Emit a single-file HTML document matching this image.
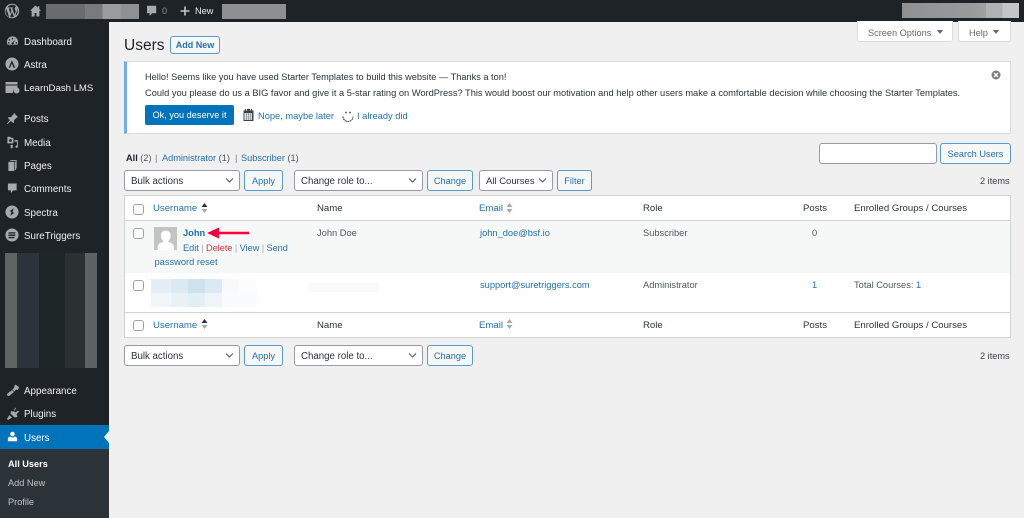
<!DOCTYPE html>
<html><head><meta charset="utf-8"><title>Users</title>
<style>
html,body{margin:0;padding:0;width:1024px;height:518px;overflow:hidden;background:#f0f0f1;font-family:"Liberation Sans",sans-serif;font-size:9.6px;color:#3c434a}
#w{position:absolute;left:0;top:0;width:1024px;height:518px;overflow:hidden;background:#f0f0f1;filter:blur(.3px)}
.a{position:absolute;white-space:nowrap;line-height:12px}
.b{position:absolute}
.m{color:#f0f0f1;font-size:9.8px}
.s{color:#c3c4c7;font-size:9.2px}
.l{color:#2271b1}
.h{color:#2c3338}
.btn{position:absolute;box-sizing:border-box;border:1px solid #5a9bcb;border-radius:3px;background:#f6f7f7;color:#2271b1;text-align:center;font-size:9.2px;height:21px;line-height:20px;white-space:nowrap}
.sel{position:absolute;box-sizing:border-box;border:1px solid #979a9f;border-radius:3px;background:#fff;color:#2c3338;font-size:9.7px;height:21px;line-height:21px;padding-left:6px;white-space:nowrap}
.sel svg{position:absolute;right:5px;top:6px}
.cb{position:absolute;box-sizing:border-box;width:11px;height:11px;border:1px solid #a0a3a8;border-radius:3px;background:#fff}
.ic{position:absolute;fill:#a7aaad}
</style></head><body><div id="w">

<div class="b" style="left:0;top:0;width:1024px;height:22px;background:#1d2327"></div>
<div class="b" style="left:0;top:22px;width:109px;height:496px;background:#1d2327"></div>

<!-- Admin bar -->
<svg class="ic" style="left:4px;top:3px" width="16" height="16" viewBox="0 0 16 16"><path fill-rule="evenodd" d="M8 .8a7.200 7.200 0 1 0 0 14.400A7.200 7.200 0 0 0 8 .8zm0 1a6.200 6.200 0 0 1 4.400 1.800c-1.200 0-2 1-1.600 2.200l.9 2.600-1.100 3.400L8.200 5.300l.7-.1v-.8H5.900v.8l.7.1.8 2.300-1.100 3.200L4.900 5.300l.7-.1v-.8H3.400A6.200 6.200 0 0 1 8 1.800zM2.200 5.700l3 8.300A6.200 6.200 0 0 1 2.200 5.700zM8.100 8.900l1.800 5a6.200 6.200 0 0 1-3.700.1zm4.900-3.600a6.200 6.200 0 0 1-1.800 8l1.600-4.700c.4-1.100.4-2.300.2-3.300z"/></svg>
<svg class="ic" style="left:29px;top:5px" width="13" height="12" viewBox="0 0 13 12"><path d="M6.500.5 1 5.700h1.600V11.500h3V8h1.800v3.500h3V5.700H12L10.300 4V1.200H8.800v1.400z"/></svg>
<div class="b" style="left:46px;top:4px;width:93px;height:15px;background:linear-gradient(90deg,#6a6d70 0,#6a6d70 42%,#787b7e 42%,#787b7e 61%,#999b9d 61%,#999b9d 80%,#8e9092 80%)"></div>
<svg class="ic" style="left:146px;top:5px" width="11" height="13" viewBox="0 0 11 13"><path d="M1 .8h9.200v7.400H6.200L3.600 11V8.200H1z"/></svg>
<div class="a" style="left:162px;top:5px;color:#8c8f94;font-size:9.200px">0</div>
<svg class="ic" style="left:180px;top:6px;fill:#c3c4c7" width="10" height="10" viewBox="0 0 10 10"><path d="M4.200.5h1.600V4.200h3.700v1.600H5.800v3.700H4.200V5.800H.5V4.200h3.700z"/></svg>
<div class="a" style="left:195px;top:5px;color:#f0f0f1;font-size:9.200px">New</div>
<div class="b" style="left:222px;top:4px;width:64px;height:15px;background:#8d8f91"></div>
<div class="b" style="left:902px;top:3px;width:117px;height:15px;background:linear-gradient(90deg,#8f9292 0,#989b9b 60%,#a0a1a2 72%,#b0b1b2 72%,#b0b1b2 86%,#c4c5c6 86%)"></div>

<!-- Sidebar icons -->
<svg class="ic" style="left:6px;top:35px" width="13" height="13" viewBox="0 0 14 14"><path fill-rule="evenodd" d="M7 1.500a6 6 0 0 0-5.200 9h10.400A6 6 0 0 0 7 1.500zM7 3a.9.9 0 1 1 0 1.800A.9.9 0 0 1 7 3zM3.800 4.400a.9.9 0 1 1 0 1.800.9.9 0 0 1 0-1.800zm6.600.2-2.300 3.700a1.200 1.200 0 1 1-1-.4zM2.900 7.500a.9.9 0 1 1 0 1.800.9.900 0 0 1 0-1.800zm8.200 0a.9.9 0 1 1 0 1.800.9.9 0 0 1 0-1.800z"/></svg>
<div class="a m" style="left:24px;top:37px">Dashboard</div>
<svg class="ic" style="left:5px;top:57px" width="14" height="14" viewBox="0 0 15 15"><path fill-rule="evenodd" d="M7.500.5a7 7 0 1 0 0 14 7 7 0 0 0 0-14zM7.400 3.500 11 11.500H9.300L7.400 7 5.500 11.500H4z"/></svg>
<div class="a m" style="left:24px;top:60px">Astra</div>
<svg class="ic" style="left:5px;top:81px" width="15" height="13" viewBox="0 0 15 13"><path d="M.5 1h12v2.500H.5zM.5 4.500h12V7a4 4 0 0 0-4.500 5H.5z"/><circle cx="11.500" cy="9.500" r="3"/></svg>
<div class="a m" style="left:24px;top:83px;font-size:9.600px">LearnDash LMS</div>
<svg class="ic" style="left:6px;top:112px" width="13" height="13" viewBox="0 0 14 14"><path d="M8.500 1 13 5.500l-1.500.5-3 3 .2 2.300-1 .7-2.300-2.300L1.500 13 1 12.500 4.300 8.700 2 6.500l.7-1 2.300.2 3-3z"/></svg>
<div class="a m" style="left:24px;top:114px">Posts</div>
<svg class="ic" style="left:6px;top:136px" width="13" height="13" viewBox="0 0 13 14"><path fill-rule="evenodd" d="M1 .8h3l1 1.200h2.500v6H1zM4.300 3.300a1.500 1.500 0 1 0 0 3 1.500 1.500 0 0 0 0-3z"/><path d="M8.600 4.500h3.700v7a1.300 1.300 0 1 1-1-1.300V6h-2.700zM4.500 9.500h2.300v2.500a1.200 1.200 0 1 1-2.300-.4z"/></svg>
<div class="a m" style="left:24px;top:138px">Media</div>
<svg class="ic" style="left:7px;top:159px" width="11" height="13" viewBox="0 0 12 14"><path d="M3.500 1H10.500v9H9.500V2H3.500z"/><path d="M1.500 3h6.500v10h-6.500zM8.700 3h1v9h-1z"/></svg>
<div class="a m" style="left:24px;top:161px">Pages</div>
<svg class="ic" style="left:7px;top:182px" width="11" height="13" viewBox="0 0 12 14"><path d="M1 1.500h9.500v7.500H7L4.200 12V9H1z"/></svg>
<div class="a m" style="left:24px;top:184px">Comments</div>
<svg class="ic" style="left:5px;top:205px" width="14" height="14" viewBox="0 0 15 15"><path fill-rule="evenodd" d="M7.500.5a7 7 0 1 0 0 14 7 7 0 0 0 0-14zM9.500 3.500 5 6.500l2 1-1.500 4L10 8.500l-2-1z"/></svg>
<div class="a m" style="left:24px;top:208px">Spectra</div>
<svg class="ic" style="left:5px;top:228px" width="14" height="14" viewBox="0 0 15 15"><path fill-rule="evenodd" d="M7.500.5a7 7 0 1 0 0 14 7 7 0 0 0 0-14zM4 4.500h7.500L10.500 6H3.500zM4 7h7.500l-.7 1.500H3.200zM4 9.500h6.500L9.800 11H3.500z"/></svg>
<div class="a m" style="left:24px;top:231px">SureTriggers</div>

<!-- Blurred sidebar block -->
<div class="b" style="left:5px;top:253px;width:92px;height:115px;background:linear-gradient(90deg,#5f6466 0,#5f6466 13%,#2c333a 13%,#2c333a 37%,#1f2628 37%,#1f2628 65%,#2b3132 65%,#2b3132 87%,#5d6265 87%)"></div>

<svg class="ic" style="left:6px;top:383px" width="14" height="14" viewBox="0 0 14 14"><path d="M9 1.500 13 4l-1 3-2-.5-1.500 2L6.500 6.500 8 4.800z"/><path d="M6 7 8 9 3 13l-2-.5L1 11z"/></svg>
<div class="a m" style="left:24px;top:386px">Appearance</div>
<svg class="ic" style="left:6px;top:406px" width="14" height="15" viewBox="0 0 14 15"><path d="M9 1.500 10 2.500 8 5l1.500 1.500L12 4.500l1 1-2.500 2.700 1 2.800-3 .5-4-4 .5-2.500 2.500.8zM3.500 9l2.500 2.500L2 14l-1-1z"/></svg>
<div class="a m" style="left:24px;top:409px">Plugins</div>

<div class="b" style="left:0;top:425px;width:109px;height:24px;background:#0073ba"></div>
<div class="b" style="left:104px;top:431px;width:0;height:0;border-top:6px solid transparent;border-bottom:6px solid transparent;border-right:5px solid #f0f0f1"></div>
<svg class="b" style="left:6.500px;top:431px;fill:#fff" width="11" height="12" viewBox="0 0 13 14"><circle cx="6.500" cy="3.500" r="2.700"/><path d="M1 12v-3c0-1.500 1.500-2.400 3-2.600.7.800 1.500 1.200 2.500 1.200S8.300 7.200 9 6.400c1.500.2 3 1.100 3 2.600v3z"/></svg>
<div class="a" style="left:24px;top:433px;color:#fff;font-size:9.800px">Users</div>

<div class="b" style="left:0;top:449px;width:109px;height:69px;background:#2c3338"></div>
<div class="a" style="left:8px;top:458px;color:#fff;font-weight:bold;font-size:9.200px">All Users</div>
<div class="a s" style="left:8px;top:477px">Add New</div>
<div class="a s" style="left:8px;top:496px">Profile</div>

<!-- Screen options -->
<div class="b" style="left:857px;top:21px;width:96px;height:21px;box-sizing:border-box;background:#fff;border:1px solid #dcdcde;border-top:0;border-radius:0 0 3px 3px"></div>
<div class="a" style="left:868px;top:27px;color:#646970;font-size:9.200px">Screen Options</div>
<div class="b" style="left:937px;top:30px;border-top:4px solid #646970;border-left:3px solid transparent;border-right:3px solid transparent"></div>
<div class="b" style="left:958px;top:21px;width:53px;height:21px;box-sizing:border-box;background:#fff;border:1px solid #dcdcde;border-top:0;border-radius:0 0 3px 3px"></div>
<div class="a" style="left:969px;top:27px;color:#646970;font-size:9.200px">Help</div>
<div class="b" style="left:993px;top:30px;border-top:4px solid #646970;border-left:3px solid transparent;border-right:3px solid transparent"></div>

<!-- Heading -->
<div class="a" style="left:124px;top:37px;font-size:15.500px;line-height:17px;color:#1d2327">Users</div>
<div class="btn" style="left:170px;top:36px;width:50px;height:18px;line-height:17px;font-weight:bold;font-size:9px">Add New</div>

<!-- Notice -->
<div class="b" style="left:124px;top:61px;width:887px;height:73px;box-sizing:border-box;background:#fff;border:1px solid #dcdcde;border-left:3px solid #72aee6"></div>
<div class="a h" style="left:145px;top:71px;font-size:9.220px">Hello! Seems like you have used Starter Templates to build this website — Thanks a ton!</div>
<div class="a h" style="left:145px;top:87px;font-size:9.290px">Could you please do us a BIG favor and give it a 5-star rating on WordPress? This would boost our motivation and help other users make a comfortable decision while choosing the Starter Templates.</div>
<div class="b" style="left:145px;top:105px;width:89px;height:20px;border-radius:2px;background:#0073ba;color:#fff;font-size:9.200px;text-align:center;line-height:21px">Ok, you deserve it</div>
<svg class="b" style="left:243px;top:109px" width="11" height="12" viewBox="0 0 11 12"><path fill="#3c434a" fill-rule="evenodd" d="M2 0h1v1.500h1V0h3v1.500h1V0h1v1.500h1.500V12H.5V1.500H2zM1.500 4v7h1.300V4zm2 0v7h1.300V4zm2 0v7h1.300V4zm2 0v7h1.300V4z"/></svg>
<div class="a l" style="left:258px;top:109.500px;font-size:9.300px">Nope, maybe later</div>
<svg class="b" style="left:342px;top:109.500px" width="12" height="12" viewBox="0 0 12 12"><path d="M1 6.500a5 5 0 0 0 10 0" fill="none" stroke="#3c434a" stroke-width="1.100" stroke-dasharray="1.800 .6"/><circle cx="4" cy="2.500" r=".9" fill="#3c434a"/><circle cx="8" cy="2.500" r=".9" fill="#3c434a"/></svg>
<div class="a l" style="left:357px;top:109.500px;font-size:9.300px">I already did</div>
<svg class="b" style="left:991px;top:70px" width="10" height="10" viewBox="0 0 10 10"><circle cx="5" cy="5" r="4.500" fill="#787c82"/><path d="M3 3l4 4M7 3 3 7" stroke="#fff" stroke-width="1.300"/></svg>

<!-- Views -->
<div class="a" style="left:126px;top:152px;font-size:9.200px;color:#50575e"><b style="color:#1d2327">All</b> (2)</div>
<div class="a" style="left:155px;top:152px;font-size:9.200px;color:#787c82">|</div>
<div class="a" style="left:162px;top:152px;font-size:9.200px;color:#50575e"><span class="l">Administrator</span> (1)</div>
<div class="a" style="left:235px;top:152px;font-size:9.200px;color:#787c82">|</div>
<div class="a" style="left:241px;top:152px;font-size:9.200px;color:#50575e"><span class="l">Subscriber</span> (1)</div>

<!-- Search -->
<div class="b" style="left:819px;top:143px;width:118px;height:21px;box-sizing:border-box;background:#fff;border:1px solid #979a9f;border-radius:3px"></div>
<div class="btn" style="left:940px;top:143px;width:71px">Search Users</div>

<!-- Top filters -->
<div class="sel" style="left:124px;top:170px;width:116px">Bulk actions<svg width="9" height="7" viewBox="0 0 9 7"><path d="M1 1.500 4.500 5 8 1.500" fill="none" stroke="#50575e" stroke-width="1"/></svg></div>
<div class="btn" style="left:244px;top:170px;width:39px">Apply</div>
<div class="sel" style="left:294px;top:170px;width:129px">Change role to...<svg width="9" height="7" viewBox="0 0 9 7"><path d="M1 1.500 4.500 5 8 1.500" fill="none" stroke="#50575e" stroke-width="1"/></svg></div>
<div class="btn" style="left:427px;top:170px;width:46px">Change</div>
<div class="sel" style="left:479px;top:170px;width:74px;font-size:9.500px">All Courses<svg width="9" height="7" viewBox="0 0 9 7"><path d="M1 1.500 4.500 5 8 1.500" fill="none" stroke="#50575e" stroke-width="1"/></svg></div>
<div class="btn" style="left:557px;top:170px;width:35px">Filter</div>
<div class="a" style="left:980px;top:175px;color:#3c434a;font-size:9.200px">2 items</div>

<!-- Table -->
<div class="b" style="left:124px;top:195px;width:887px;height:143px;box-sizing:border-box;background:#fff;border:1px solid #d2d3d6"></div>
<div class="b" style="left:125px;top:220px;width:885px;height:1px;background:#d2d3d6"></div>
<div class="b" style="left:125px;top:221px;width:885px;height:52px;background:#f6f7f7"></div>
<div class="b" style="left:125px;top:312px;width:885px;height:1px;background:#d2d3d6"></div>

<div class="cb" style="left:133px;top:204px"></div>
<div class="a l" style="left:153px;top:203px;font-size:9.600px">Username</div>
<svg class="b" style="left:201px;top:202px" width="7" height="12" viewBox="0 0 7 12"><path d="M3.500 1 6.500 5H.5z" fill="#2c3338"/><path d="M3.500 11 6.500 7H.5z" fill="#a7aaad"/></svg>
<div class="a h" style="left:317px;top:203px;font-size:9.600px">Name</div>
<div class="a l" style="left:479px;top:203px;font-size:9.600px">Email</div>
<svg class="b" style="left:506px;top:202px" width="7" height="12" viewBox="0 0 7 12"><path d="M3.500 1 6.500 5H.5z" fill="#a7aaad"/><path d="M3.500 11 6.500 7H.5z" fill="#a7aaad"/></svg>
<div class="a h" style="left:643px;top:203px;font-size:9.600px">Role</div>
<div class="a h" style="left:803px;top:203px;font-size:9.600px">Posts</div>
<div class="a h" style="left:854px;top:203px;font-size:9.600px">Enrolled Groups / Courses</div>

<!-- Row 1 -->
<div class="cb" style="left:133px;top:228px"></div>
<svg class="b" style="left:154px;top:227px" width="23" height="23" viewBox="0 0 23 23"><rect width="23" height="23" fill="#c3c3c3"/><path d="M11.500 3.500c3 0 5.200 2.200 5.200 5.200 0 2.200-1 4-2.300 5.100v1.200c2.800.6 5.400 2 5.400 4.500V23H3.700v-3.500c0-2.500 2.600-3.900 5.400-4.500v-1.200c-1.300-1.100-2.300-2.900-2.300-5.100 0-3 2.200-5.200 4.700-5.200z" fill="#fff"/></svg>
<div class="a l" style="left:183px;top:227px;font-weight:bold;font-size:9.300px">John</div>
<svg class="b" style="left:206px;top:226px" width="44" height="14" viewBox="0 0 44 14"><path d="M1 7 13 1.500V5.700H43V8.300H13V12.500z" fill="#f6003c"/></svg>
<div class="a" style="left:183px;top:242px;font-size:9.200px;color:#a7aaad;word-spacing:-.2px"><span class="l">Edit</span> | <span style="color:#d63638">Delete</span> | <span class="l">View</span> | <span class="l">Send</span></div>
<div class="a l" style="left:154.500px;top:256px;font-size:9.300px">password reset</div>
<div class="a" style="left:317px;top:227px;font-size:9.300px;color:#50575e">John Doe</div>
<div class="a l" style="left:480px;top:227px;font-size:9.300px">john_doe@bsf.io</div>
<div class="a" style="left:643px;top:227px;font-size:9.300px;color:#50575e">Subscriber</div>
<div class="a" style="left:812px;top:227px;font-size:9.300px;color:#50575e">0</div>

<!-- Row 2 -->
<div class="cb" style="left:133px;top:280px"></div>
<div class="b" style="left:151px;top:279px;width:106px;height:14px;background:linear-gradient(90deg,#e3eef7 0,#e3eef7 19%,#dbe9f3 19%,#dbe9f3 35%,#cfe1ee 35%,#cfe1ee 51%,#dbe9f3 51%,#dbe9f3 67%,#f7f9fb 67%,#f7f9fb 83%,#fbfcfd 83%)"></div>
<div class="b" style="left:151px;top:293px;width:106px;height:14px;background:linear-gradient(90deg,#f0f6fa 0,#f0f6fa 19%,#eaf2f8 19%,#eaf2f8 35%,#e4eef5 35%,#e4eef5 51%,#eef4f9 51%,#eef4f9 67%,#fafbfc 67%)"></div>
<div class="b" style="left:308px;top:283px;width:71px;height:9px;background:#fafafa"></div>
<div class="a l" style="left:480px;top:279px;font-size:9.300px">support@suretriggers.com</div>
<div class="a" style="left:643px;top:279px;font-size:9.300px;color:#50575e">Administrator</div>
<div class="a l" style="left:812px;top:279px;font-size:9.300px">1</div>
<div class="a" style="left:854px;top:279px;font-size:9.300px;color:#50575e">Total Courses: <span class="l">1</span></div>

<!-- Footer -->
<div class="cb" style="left:133px;top:320px"></div>
<div class="a l" style="left:153px;top:320px;font-size:9.600px">Username</div>
<svg class="b" style="left:201px;top:318px" width="7" height="12" viewBox="0 0 7 12"><path d="M3.500 1 6.500 5H.5z" fill="#2c3338"/><path d="M3.500 11 6.500 7H.5z" fill="#a7aaad"/></svg>
<div class="a h" style="left:317px;top:320px;font-size:9.600px">Name</div>
<div class="a l" style="left:479px;top:320px;font-size:9.600px">Email</div>
<svg class="b" style="left:506px;top:318px" width="7" height="12" viewBox="0 0 7 12"><path d="M3.500 1 6.500 5H.5z" fill="#a7aaad"/><path d="M3.500 11 6.500 7H.5z" fill="#a7aaad"/></svg>
<div class="a h" style="left:643px;top:320px;font-size:9.600px">Role</div>
<div class="a h" style="left:803px;top:320px;font-size:9.600px">Posts</div>
<div class="a h" style="left:854px;top:320px;font-size:9.600px">Enrolled Groups / Courses</div>

<!-- Bottom filters -->
<div class="sel" style="left:124px;top:345px;width:116px">Bulk actions<svg width="9" height="7" viewBox="0 0 9 7"><path d="M1 1.500 4.500 5 8 1.500" fill="none" stroke="#50575e" stroke-width="1"/></svg></div>
<div class="btn" style="left:244px;top:345px;width:39px">Apply</div>
<div class="sel" style="left:294px;top:345px;width:129px">Change role to...<svg width="9" height="7" viewBox="0 0 9 7"><path d="M1 1.500 4.500 5 8 1.500" fill="none" stroke="#50575e" stroke-width="1"/></svg></div>
<div class="btn" style="left:427px;top:345px;width:46px">Change</div>
<div class="a" style="left:980px;top:350px;color:#3c434a;font-size:9.200px">2 items</div>

</div></body></html>
